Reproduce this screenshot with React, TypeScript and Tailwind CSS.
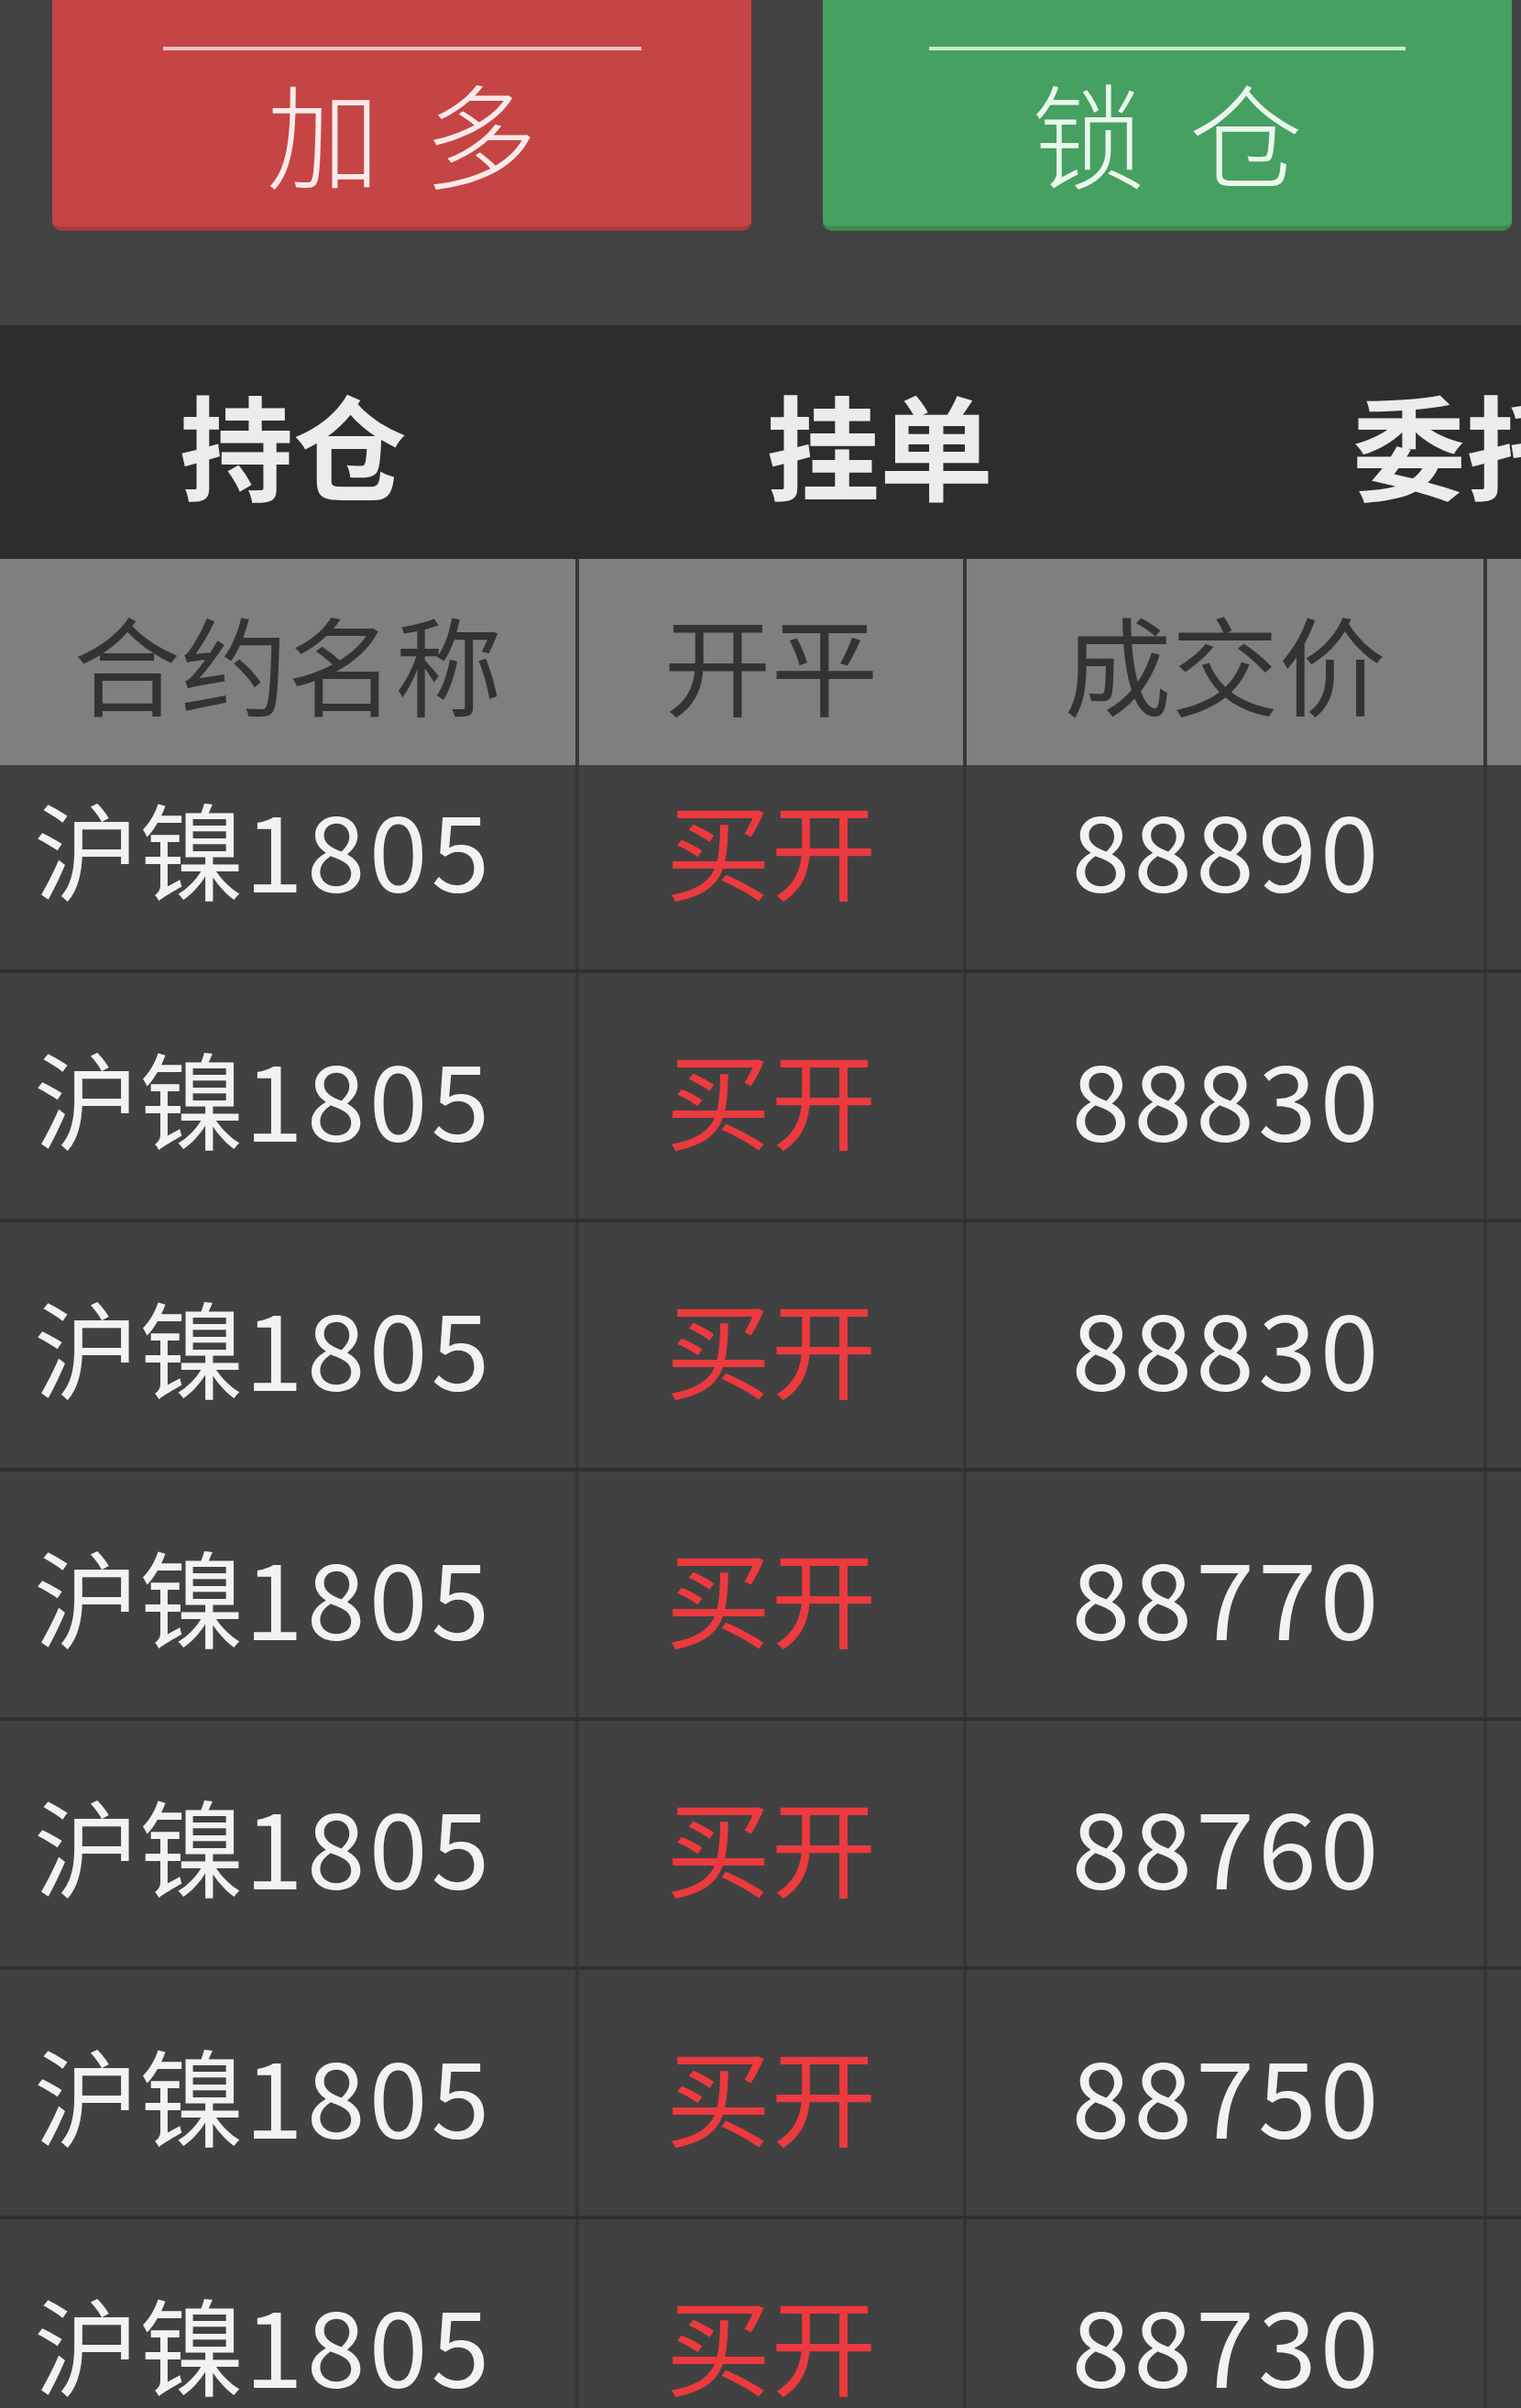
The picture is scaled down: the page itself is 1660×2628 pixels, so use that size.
import React from "react";

const rows = ["88890", "88830", "88830", "88770", "88760", "88750", "88730"];

export default function App() {
  return (
    <div className="w-[1660px] h-[2628px] bg-[#424242] overflow-hidden flex flex-col font-['Noto_Sans_CJK_SC','Noto_Sans',sans-serif]">
      {/* action buttons */}
      <div className="h-[355px] shrink-0 flex items-start pl-[57px] gap-[78px]">
        <div className="w-[763px] h-[252px] rounded-b-[10px] bg-[#c54545] border-b-[5px] border-[#a83c3c] flex flex-col">
          <div className="mt-[51px] mx-auto w-[522px] h-[4px] bg-[#f6c4c4]" />
          <div className="mt-[26px] text-center text-[124px] leading-none font-light text-[#fbeaea] tracking-[10px] pl-[10px]">
            加 多
          </div>
        </div>
        <div className="w-[752px] h-[252px] rounded-b-[10px] bg-[#46a061] border-b-[5px] border-[#3a8a52] flex flex-col">
          <div className="mt-[51px] mx-auto w-[520px] h-[4px] bg-[#c6f0cf]" />
          <div className="mt-[26px] text-center text-[124px] leading-none font-light text-[#eaf7ec] tracking-[10px] pl-[10px]">
            锁 仓
          </div>
        </div>
      </div>

      {/* tabs */}
      <div className="h-[255px] shrink-0 bg-[#2d2d2d] overflow-hidden">
        <div className="w-[1920px] h-full flex items-center">
          {["持仓", "挂单", "委托"].map((t) => (
            <div key={t} className="w-[640px] text-center text-[124px] leading-none font-bold text-[#ececec]">
              {t}
            </div>
          ))}
        </div>
      </div>

      {/* header */}
      <div className="h-[225px] shrink-0 bg-[#7f7f7f] overflow-hidden">
        <div className="w-[2200px] h-full flex text-[117px] leading-none text-[#333333]">
          <div className="w-[632px] h-full border-r-[4px] border-[#383838] flex items-center justify-center">合约名称</div>
          <div className="w-[423px] h-full border-r-[4px] border-[#383838] flex items-center justify-center">开平</div>
          <div className="w-[568px] h-full border-r-[4px] border-[#383838] flex items-center justify-center">成交价</div>
          <div className="w-[500px] h-full" />
        </div>
      </div>

      {/* rows */}
      <div className="flex-1 overflow-hidden">
        <div className="-mt-[45px] w-[2200px]">
          {rows.map((p, i) => (
            <div key={i} className="h-[272px] border-b-[4px] border-[#303030] bg-[#414141] flex text-[115px] leading-none">
              <div className="w-[632px] h-full border-r-[4px] border-[#363636] flex items-center pl-[37px] text-[#f2f2f2]">
                沪镍<span className="tracking-[4px]">1805</span>
              </div>
              <div className="w-[423px] h-full border-r-[4px] border-[#363636] flex items-center justify-center text-[#ec3a3e]">
                买开
              </div>
              <div className="w-[568px] h-full border-r-[4px] border-[#363636] flex items-center justify-center text-[#f2f2f2] tracking-[4px] pl-[4px]">
                {p}
              </div>
              <div className="w-[500px] h-full" />
            </div>
          ))}
        </div>
      </div>
    </div>
  );
}
